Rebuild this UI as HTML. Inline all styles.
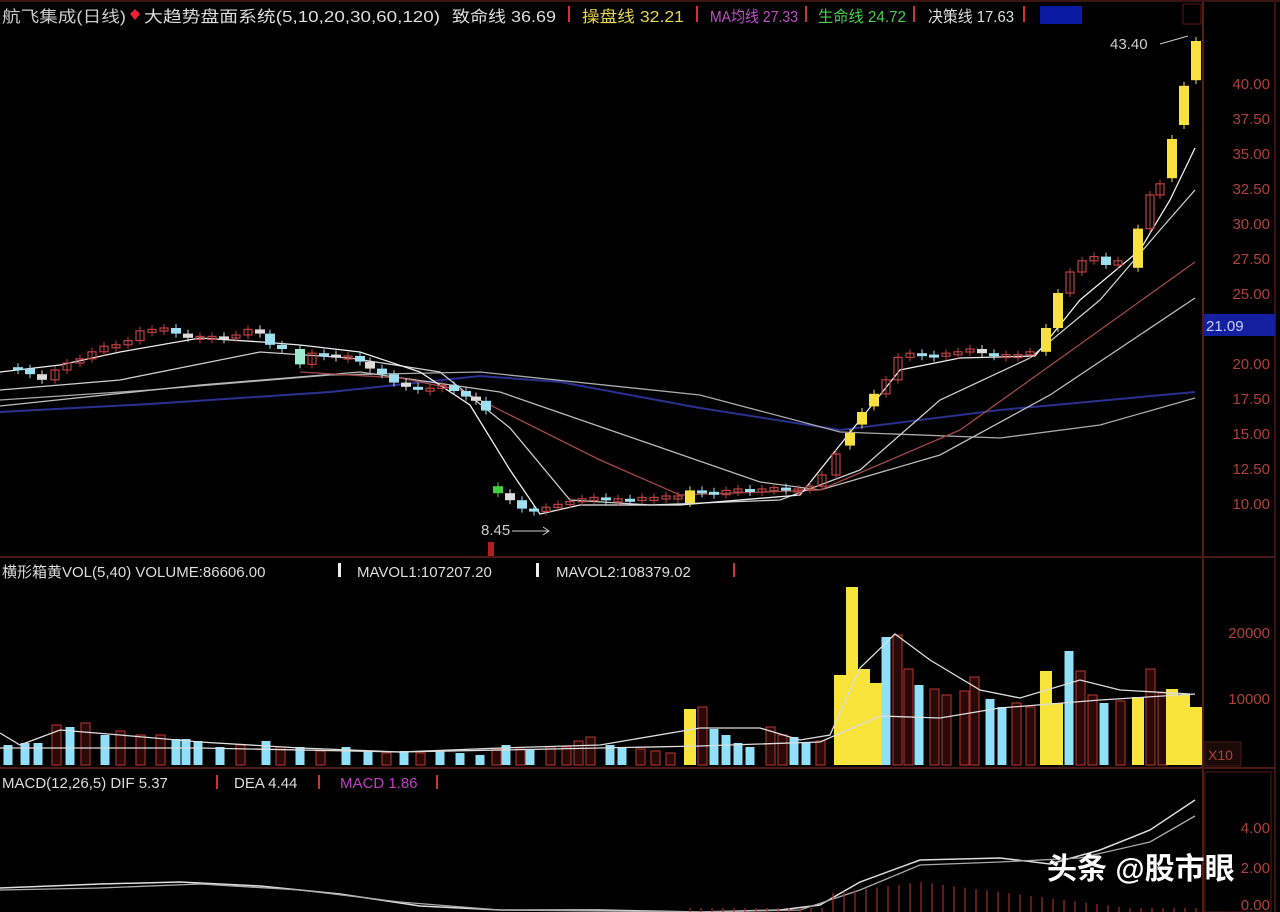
<!DOCTYPE html>
<html><head><meta charset="utf-8"><style>
html,body{margin:0;padding:0;background:#000;width:1280px;height:912px;overflow:hidden}
svg{display:block}
text{font-family:"Liberation Sans","Noto Sans CJK SC",sans-serif}
</style></head><body>
<svg id="s" width="1280" height="912" viewBox="0 0 1280 912" xmlns="http://www.w3.org/2000/svg">
<rect width="1280" height="912" fill="#000"/>
<line x1="1203" y1="0" x2="1203" y2="912" stroke="#5a1a14" stroke-width="2"/>
<line x1="1275" y1="0" x2="1275" y2="912" stroke="#3a1410" stroke-width="2"/>
<line x1="0" y1="557" x2="1275" y2="557" stroke="#4a1a14" stroke-width="2"/>
<line x1="0" y1="768" x2="1275" y2="768" stroke="#4a1a14" stroke-width="2"/>
<line x1="0" y1="1" x2="1280" y2="1" stroke="#3a1410" stroke-width="2"/>
<text x="2" y="22" font-size="16" fill="#ccc" textLength="124" lengthAdjust="spacingAndGlyphs">航飞集成(日线)</text>
<path d="M135 9 l5 5 -5 6 -5 -6z" fill="#e23"/>
<text x="144" y="22" font-size="16" fill="#ddd" textLength="296" lengthAdjust="spacingAndGlyphs">大趋势盘面系统(5,10,20,30,60,120)</text>
<text x="452" y="22" font-size="16" fill="#ddd" textLength="104" lengthAdjust="spacingAndGlyphs">致命线 36.69</text>
<rect x="568" y="6" width="2" height="16" fill="#c33"/>
<text x="582" y="22" font-size="16" fill="#e8d84a" textLength="102" lengthAdjust="spacingAndGlyphs">操盘线 32.21</text>
<rect x="696" y="6" width="2" height="16" fill="#c33"/>
<text x="710" y="22" font-size="16" fill="#c050c8" textLength="88" lengthAdjust="spacingAndGlyphs">MA均线 27.33</text>
<rect x="805" y="6" width="2" height="16" fill="#c33"/>
<text x="818" y="22" font-size="16" fill="#4ad04a" textLength="88" lengthAdjust="spacingAndGlyphs">生命线 24.72</text>
<rect x="913" y="6" width="2" height="16" fill="#c33"/>
<text x="928" y="22" font-size="16" fill="#ddd" textLength="86" lengthAdjust="spacingAndGlyphs">决策线 17.63</text>
<rect x="1023" y="6" width="2" height="16" fill="#c33"/>
<rect x="1040" y="6" width="42" height="18" fill="#0a1aa0"/>
<rect x="1183" y="4" width="18" height="20" fill="none" stroke="#5a1a14"/>
<g font-size="15" fill="#b0403a" text-anchor="end">
<text x="1270" y="89">40.00</text><text x="1270" y="124">37.50</text>
<text x="1270" y="159">35.00</text><text x="1270" y="194">32.50</text>
<text x="1270" y="229">30.00</text><text x="1270" y="264">27.50</text>
<text x="1270" y="299">25.00</text>
<text x="1270" y="369">20.00</text><text x="1270" y="404">17.50</text>
<text x="1270" y="439">15.00</text><text x="1270" y="474">12.50</text>
<text x="1270" y="509">10.00</text>
<text x="1270" y="638">20000</text><text x="1270" y="704">10000</text>
<text x="1270" y="833">4.00</text><text x="1270" y="873">2.00</text><text x="1270" y="910">0.00</text>
</g>
<rect x="1203" y="314" width="72" height="22" fill="#1520a0"/>
<text x="1206" y="331" font-size="15" fill="#c8d0ff">21.09</text>
<rect x="1205" y="742" width="36" height="24" fill="#1a0a08" stroke="#4a1a14"/>
<text x="1208" y="760" font-size="14" fill="#b0403a">X10</text>
<rect x="1205" y="772" width="66" height="140" fill="none" stroke="#5a1a14"/>
<g id="lines" fill="none"></g>
<g id="cand"></g>
<g id="vol"></g>
<text x="1110" y="49" font-size="15" fill="#ccc">43.40</text>
<path d="M1160 44 L1188 36" stroke="#ccc" fill="none"/>
<text x="481" y="535" font-size="15" fill="#ccc">8.45</text>
<path d="M512 531 L548 531 M543 527 L549 531 543 535" stroke="#ccc" fill="none"/>
<rect x="488" y="542" width="6" height="14" fill="#b02020"/>
<text x="2" y="577" font-size="15" fill="#ddd">横形箱黄VOL(5,40) VOLUME:86606.00</text>
<rect x="338" y="563" width="3" height="14" fill="#eee"/>
<text x="357" y="577" font-size="15" fill="#ddd">MAVOL1:107207.20</text>
<rect x="536" y="563" width="3" height="14" fill="#eee"/>
<text x="556" y="577" font-size="15" fill="#ddd">MAVOL2:108379.02</text>
<rect x="733" y="563" width="2" height="14" fill="#c33"/>
<text x="2" y="788" font-size="15" fill="#ddd">MACD(12,26,5) DIF 5.37</text>
<rect x="216" y="775" width="2" height="14" fill="#c33"/>
<text x="234" y="788" font-size="15" fill="#ddd">DEA 4.44</text>
<rect x="318" y="775" width="2" height="14" fill="#c33"/>
<text x="340" y="788" font-size="15" fill="#c040c0">MACD 1.86</text>
<rect x="436" y="775" width="2" height="14" fill="#c33"/>
<g id="macd"></g>
<text x="1047" y="879" font-size="30" font-weight="bold" fill="#fff" font-family="'Noto Sans CJK SC',sans-serif">头条 @股市眼</text>
</svg>
<script>
(function(){
var NS="http://www.w3.org/2000/svg";
function el(p,t,a){var e=document.createElementNS(NS,t);for(var k in a)e.setAttribute(k,a[k]);document.getElementById(p).appendChild(e);return e;}
function Y(p){return 503-(p-10)*14;}
var L=[
["#2a3090",2,"0,412 150,404 330,392 480,376 560,382 700,408 840,430 1000,410 1195,392"],
["#aaa",1.3,"0,400 150,390 330,375 480,372 700,395 840,432 1000,438 1100,425 1195,398"],
["#bbb",1.3,"0,406 200,385 360,372 500,392 760,482 820,490 940,455 1050,395 1195,298"],
["#a04848",1.3,"300,372 400,378 460,390 520,420 600,460 680,495 820,490 960,430 1100,330 1195,262"],
["#ccc",1.3,"0,390 120,380 260,352 350,358 440,372 510,428 570,500 650,505 780,500 860,470 940,400 1030,358 1100,300 1160,230 1195,190"],
["#eee",1.3,"0,372 60,365 120,352 200,338 262,342 300,345 360,352 420,372 470,405 510,470 540,514 580,505 680,505 800,495 860,420 900,370 960,358 1035,356 1080,300 1140,250 1170,200 1195,148"]
];
L.forEach(function(l){el("lines","polyline",{points:l[2],stroke:l[0],"stroke-width":l[1]});});
var p=[[5,19.7],[18,19.6],[30,19.2],[42,18.8],[55,19.5],[67,20.0],[80,20.3],[92,20.8],[104,21.2],[116,21.3],[128,21.6],[140,22.3],[152,22.4],[164,22.5],[176,22.1],[188,21.8],[200,21.9],[212,21.9],[224,21.8],[236,22.0],[248,22.4],[260,22.1],[270,21.3],[282,21.0],[300,19.9],[312,20.7],[324,20.6],[336,20.4],[348,20.5],[360,20.1],[370,19.6],[382,19.2],[394,18.6],[406,18.3],[418,18.1],[430,18.2],[442,18.4],[454,18.0],[466,17.6],[476,17.3],[486,16.6],
[498,10.7],[510,10.2],[522,9.6],[534,9.4],[546,9.7],[558,9.9],[570,10.1],[582,10.3],[594,10.4],[606,10.3],[618,10.3],[630,10.2],[642,10.4],[654,10.4],[666,10.5],[678,10.5],[690,10.9],[702,10.8],[714,10.6],[726,10.9],[738,11.0],[750,10.9],[762,11.0],[774,11.1],[786,11.0],[798,11.0],[810,11.2],[822,12.0],[836,13.5],[850,15.0],[862,16.5],[874,17.8],[886,18.8],[898,20.4],[910,20.7],[922,20.6],[934,20.5],[946,20.7],[958,20.8],[970,21.0],[982,20.7],[994,20.6],[1006,20.6],[1018,20.6],[1030,20.8],[1046,22.5],[1058,25.0],[1070,26.5],[1082,27.3],[1094,27.6],[1106,27.0],[1118,27.3],[1138,29.6],[1150,32.0],[1160,32.8],[1172,36.0],[1184,39.8],[1196,43.0]];
var big={1046:1,1058:1,850:1,862:1,874:1,1138:1,1172:1,1184:1,1196:1,690:1};
for(var i=1;i<p.length;i++){
 var x=p[i][0],c=p[i][1],o=p[i-1][1],col;
 if(x==498){o=11.2;}
 if(big[x]){col="#f7e040";if(x>=1138)o=c-2.8;else if(x<=874)o=c-0.9;else o=Math.min(o,c-1.2);}
 else if(x==498) col="#40d040";
 else if(x==300) col="#a0e8d0";
 else if(c<o) col=(i%3==0)?"#ddd":"#9fe0f0";
 else col="#c04040";
 var ty=Y(Math.max(o,c)),h=Math.max(3,Math.abs(Y(o)-Y(c)));
 el("cand","line",{x1:x,y1:ty-4,x2:x,y2:ty+h+4,stroke:col,"stroke-width":1});
 if(col=="#c04040") el("cand","rect",{x:x-4,y:ty,width:8,height:h,fill:"none",stroke:col,"stroke-width":1.2});
 else el("cand","rect",{x:x-5,y:ty,width:10,height:h,fill:col});
}
var V=[[8,"c",20],[25,"c",22],[38,"c",22],[56,"r",40],[70,"c",38],[85,"r",42],[105,"c",30],[120,"r",34],[140,"r",30],[160,"r",30],[176,"c",26],[186,"c",26],[198,"c",24],[220,"c",18],[240,"r",20],[266,"c",24],[280,"r",18],[300,"c",18],[320,"r",14],[346,"c",18],[368,"c",14],[386,"r",12],[404,"c",14],[420,"r",12],[440,"c",14],[460,"c",12],[480,"c",10],[496,"r",16],[506,"c",20],[520,"r",16],[530,"c",16],[550,"r",18],[566,"r",18],[578,"r",24],[590,"r",28],[610,"c",20],[622,"c",18],[640,"r",16],[655,"r",14],[670,"r",12],[690,"y",56],[702,"r",58],[714,"c",36],[726,"c",30],[738,"c",22],[750,"c",18],[770,"r",38],[782,"r",30],[794,"c",28],[806,"c",22],[820,"r",24],[840,"y",90],[852,"y",178],[864,"y",96],[876,"y",82],[886,"c",128],[897,"r",130],[908,"r",96],[919,"c",80],[934,"r",76],[946,"r",70],[964,"r",74],[974,"r",88],[990,"c",66],[1002,"c",58],[1016,"r",62],[1030,"r",58],[1046,"y",94],[1057,"y",62],[1069,"c",114],[1080,"r",94],[1092,"r",70],[1104,"c",62],[1120,"r",64],[1138,"y",68],[1150,"r",96],[1162,"r",72],[1172,"y",76],[1184,"y",70],[1196,"y",58]];
V.forEach(function(v){var col=v[1]=="c"?"#8fe0f8":"#f8e43a";var w=v[1]=="y"?12:9;
 if(v[1]=="r")el("vol","rect",{x:v[0]-4,y:765-v[2],width:w,height:v[2],fill:"#2a0a08",stroke:"#a03028","stroke-width":1.2});
 else el("vol","rect",{x:v[0]-w/2,y:765-v[2],width:w,height:v[2],fill:col});});
el("vol","polyline",{points:"0,733 20,745 60,730 120,735 200,742 300,748 400,752 500,748 600,745 700,728 760,728 800,740 830,735 860,668 895,634 930,660 980,690 1020,698 1080,680 1120,690 1190,694",fill:"none",stroke:"#ddd","stroke-width":1.3});
el("vol","polyline",{points:"0,748 200,748 400,752 600,748 700,746 820,742 880,716 940,718 1000,708 1100,700 1195,694",fill:"none",stroke:"#ddd","stroke-width":1.3});
el("macd","polyline",{points:"0,888 100,884 180,882 260,886 340,894 420,906 500,910 600,910 700,912 780,910 820,905 860,882 920,860 1000,858 1050,864 1100,850 1150,830 1195,800",fill:"none",stroke:"#ddd","stroke-width":1.5});
el("macd","polyline",{points:"0,890 100,888 200,884 300,890 400,902 500,910 700,912 800,910 860,890 920,865 1000,862 1080,858 1150,842 1195,816",fill:"none",stroke:"#aaa","stroke-width":1.3});
for(var x=690;x<1200;x+=11){var h=(x<830)?4:Math.max(4,30-Math.abs(x-920)/8);el("macd","line",{x1:x,y1:912,x2:x,y2:912-h,stroke:"#a03028","stroke-width":1.2});}
})();
</script>
</body></html>
